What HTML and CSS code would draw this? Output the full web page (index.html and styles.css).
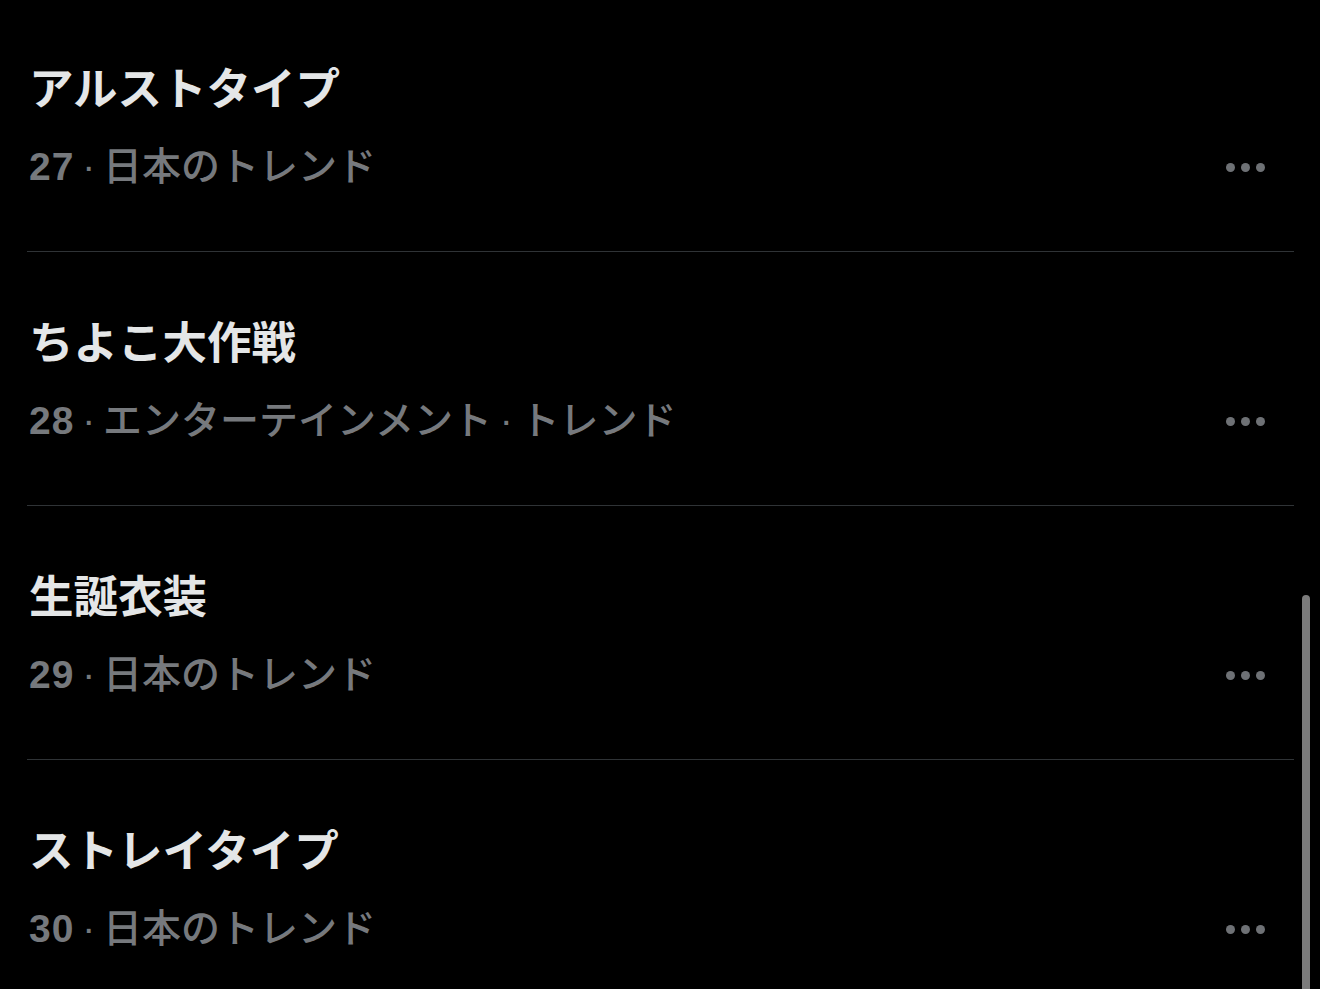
FILE: index.html
```html
<!DOCTYPE html>
<html lang="ja">
<head>
    <meta charset="UTF-8">
    <meta name="viewport" content="width=device-width, initial-scale=1.0">
    <title>トレンド</title>
    <link rel="stylesheet" href="styles.css">
</head>
<body>

<div class="page">
    <div class="trend-list">
        <div class="trend">
            <div class="trend-text">
                <div class="trend-title">アルストタイプ</div>
                <div class="trend-meta"><span class="rank">27</span> · 日本のトレンド</div>
            </div>
            <div class="more"><span></span><span></span><span></span></div>
        </div>
        <div class="trend">
            <div class="trend-text">
                <div class="trend-title">ちよこ大作戦</div>
                <div class="trend-meta"><span class="rank">28</span> · エンターテインメント · トレンド</div>
            </div>
            <div class="more"><span></span><span></span><span></span></div>
        </div>
        <div class="trend">
            <div class="trend-text">
                <div class="trend-title">生誕衣装</div>
                <div class="trend-meta"><span class="rank">29</span> · 日本のトレンド</div>
            </div>
            <div class="more"><span></span><span></span><span></span></div>
        </div>
        <div class="trend">
            <div class="trend-text">
                <div class="trend-title">ストレイタイプ</div>
                <div class="trend-meta"><span class="rank">30</span> · 日本のトレンド</div>
            </div>
            <div class="more"><span></span><span></span><span></span></div>
        </div>
    </div>
    <div class="scrollbar"><div class="thumb"></div></div>
</div>

</body>
</html>
```

FILE: styles.css
```css
html, body {
    margin: 0;
    height: 100%;
    background-color: #000;
    overflow: hidden;
}

body {
    font-family: "Liberation Sans", "Noto Sans CJK JP", sans-serif;
    color: #e7e9ea;
}

.page {
    display: flex;
    height: 100vh;
}

.trend-list {
    flex: 1;
    margin-top: -2px;
    padding-left: 27px;
    padding-right: 8px;
}

.trend {
    display: flex;
    align-items: flex-end;
    height: 253px;
    border-bottom: 1px solid #2f3336;
}

.trend-text {
    flex: 1;
    padding-top: 64px;
    padding-bottom: 55px;
    padding-left: 2px;
}

.trend-title {
    font-size: 44.5px;
    font-weight: 700;
    line-height: 56px;
    color: #e4e6e7;
}

.trend-meta {
    margin-top: 20px;
    font-size: 39px;
    font-weight: 500;
    line-height: 58px;
    color: #76797d;
    word-spacing: -3px;
}

.rank {
    font-weight: 700;
    letter-spacing: 1px;
}

.more {
    display: flex;
    gap: 6px;
    margin-right: 29px;
    margin-bottom: 79px;
}

.more span {
    width: 9px;
    height: 9px;
    border-radius: 50%;
    background-color: #6e7175;
}

.scrollbar {
    width: 18px;
    display: flex;
    flex-direction: column;
    justify-content: flex-end;
    align-items: flex-start;
}

.thumb {
    width: 8px;
    height: 394px;
    border-radius: 4px 4px 0 0;
    background-color: #7b7b7b;
}
```
